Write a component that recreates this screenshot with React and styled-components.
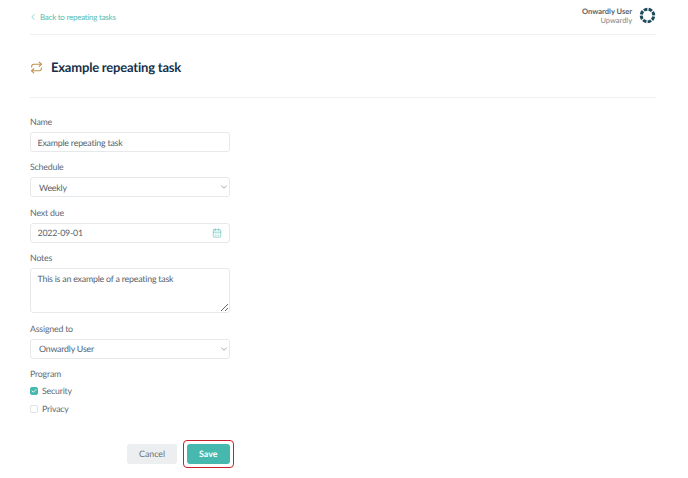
import React from 'react';
import styled, { createGlobalStyle } from 'styled-components';
import { ChevronLeft, ChevronDown, Repeat, CalendarDays, Check } from 'lucide-react';

const GlobalStyle = createGlobalStyle`
    html, body {
        margin: 0;
        padding: 0;
        background: #fff;
    }
    * {
        box-sizing: border-box;
    }
    body, input, select, textarea, button {
        text-rendering: geometricPrecision;
    }
`;

const FONT = `Lato, "Noto Sans", sans-serif`;
const TIGHT = '-0.2px';

const Page = styled.div`
    width: 688px;
    height: 478px;
    padding: 0 32px 0 30px;
    font-family: ${FONT};
    overflow: hidden;
`;

// top bar
const TopBar = styled.header`
    height: 35px;
    display: flex;
    align-items: center;
    justify-content: space-between;
    border-bottom: 1px solid #eef0f1;
`;

const BackLink = styled.a`
    display: flex;
    align-items: center;
    gap: 2px;
    margin-left: -2px;
    color: #57bdb3;
    font-size: 8px;
    letter-spacing: -0.25px;
`;

const UserBox = styled.div`
    display: flex;
    align-items: center;
    gap: 7px;
    margin-bottom: 3px;
`;

const UserText = styled.div`
    text-align: right;
    font-size: 7.5px;
    line-height: 9px;
    color: #7d858b;
    strong {
        display: block;
        color: #585f66;
        font-weight: 700;
    }
`;

// title
const TitleRow = styled.div`
    height: 63px;
    display: flex;
    align-items: center;
    gap: 8px;
    padding-top: 2px;
    border-bottom: 1px solid #eef0f1;
    color: #c2924f;
`;

const Title = styled.h1`
    margin: 0;
    font-size: 13px;
    font-weight: 700;
    letter-spacing: ${TIGHT};
    color: #16304a;
`;

// form
const Form = styled.form`
    width: 199.5px;
    padding-top: 17px;
    display: flex;
    flex-direction: column;
`;

const Label = styled.label`
    display: block;
    height: 14px;
    line-height: 14px;
    margin-bottom: ${(p) => p.$gap ?? 3}px;
    font-size: 8.8px;
    letter-spacing: ${TIGHT};
    color: #5f6a72;
`;

const Field = styled.div`
    position: relative;
    margin-bottom: ${(p) => p.$gap ?? 8.3}px;
`;

const Input = styled.input`
    display: block;
    width: 100%;
    height: 20px;
    padding: 0 6.5px;
    border: 1px solid #e6e9eb;
    border-radius: 3px;
    background: #fff;
    font-family: ${FONT};
    font-size: 8.8px;
    letter-spacing: ${TIGHT};
    color: #56616a;
    outline: none;
`;

const Select = styled.select`
    display: block;
    width: 100%;
    height: 20px;
    padding: 0 8px;
    border: 1px solid #e6e9eb;
    border-radius: 3px;
    background: #fff;
    font-family: ${FONT};
    font-size: 8.8px;
    letter-spacing: ${TIGHT};
    color: #56616a;
    appearance: none;
    outline: none;
`;

const TextArea = styled.textarea`
    display: block;
    width: 100%;
    height: 45px;
    padding: 4px 6.5px;
    border: 1px solid #e6e9eb;
    border-radius: 3px;
    font-family: ${FONT};
    font-size: 8.8px;
    letter-spacing: ${TIGHT};
    line-height: 12px;
    color: #56616a;
    outline: none;
`;

// icon sitting on top of a field
const FieldIcon = styled.span`
    position: absolute;
    top: 5px;
    right: ${(p) => p.$right}px;
    display: flex;
    color: ${(p) => p.$color};
    pointer-events: none;
`;

const CheckRow = styled.div`
    display: flex;
    align-items: center;
    gap: 4px;
    height: 18px;
    font-size: 8.8px;
    letter-spacing: ${TIGHT};
    color: #5f6a72;
`;

const Box = styled.span`
    width: 8px;
    height: 8px;
    display: flex;
    align-items: center;
    justify-content: center;
    border-radius: 2px;
    border: 1px solid ${(p) => (p.$checked ? '#46b8ad' : '#dfe3e5')};
    background: ${(p) => (p.$checked ? '#46b8ad' : '#fff')};
    color: #fff;
`;

const Actions = styled.div`
    display: flex;
    justify-content: flex-end;
    gap: 10px;
    margin-top: 26px;
`;

const Button = styled.button`
    position: relative;
    height: 20px;
    width: ${(p) => p.$width}px;
    border: none;
    border-radius: 3px;
    font-family: ${FONT};
    font-size: 8.8px;
    font-weight: ${(p) => (p.$primary ? 700 : 400)};
    background: ${(p) => (p.$primary ? '#46b8ad' : '#eceeef')};
    color: ${(p) => (p.$primary ? '#fff' : '#68727a')};
`;

// red annotation drawn round the save button
const Highlight = styled.span`
    position: absolute;
    top: -4px;
    left: -4px;
    right: -4.5px;
    bottom: -4px;
    border: 1.5px solid #c8202c;
    border-radius: 4px;
`;

function RingLogo() {
    const dots = Array.from({ length: 8 }, (_, i) => i * 45 + 10);
    return (
        <svg width="17" height="17" viewBox="0 0 34 34">
            {dots.map((a) => (
                <path
                    key={a}
                    d="M17 4.5 a12.5 12.5 0 0 1 7 2.1"
                    fill="none"
                    stroke="#1e4a5a"
                    strokeWidth="6"
                    transform={`rotate(${a} 17 17)`}
                />
            ))}
        </svg>
    );
}

export default function App() {
    return (
        <Page>
            <GlobalStyle />
            <TopBar>
                <BackLink>
                    <ChevronLeft size={10} strokeWidth={1.5} />
                    Back to repeating tasks
                </BackLink>
                <UserBox>
                    <UserText>
                        <strong>Onwardly User</strong>
                        Upwardly
                    </UserText>
                    <RingLogo />
                </UserBox>
            </TopBar>

            <TitleRow>
                <Repeat size={13} strokeWidth={2} />
                <Title>Example repeating task</Title>
            </TitleRow>

            <Form onSubmit={(e) => e.preventDefault()}>
                <Label>Name</Label>
                <Field>
                    <Input defaultValue="Example repeating task" />
                </Field>

                <Label>Schedule</Label>
                <Field>
                    <Select defaultValue="Weekly">
                        <option>Weekly</option>
                    </Select>
                    <FieldIcon $right={1} $color="#6c767d">
                        <ChevronDown size={10} strokeWidth={1.5} />
                    </FieldIcon>
                </Field>

                <Label>Next due</Label>
                <Field>
                    <Input defaultValue="2022-09-01" />
                    <FieldIcon $right={8} $color="#57bdb3">
                        <CalendarDays size={10} strokeWidth={1.5} />
                    </FieldIcon>
                </Field>

                <Label>Notes</Label>
                <Field $gap={9}>
                    <TextArea defaultValue="This is an example of a repeating task" />
                </Field>

                <Label>Assigned to</Label>
                <Field $gap={8}>
                    <Select defaultValue="Onwardly User">
                        <option>Onwardly User</option>
                    </Select>
                    <FieldIcon $right={1} $color="#6c767d">
                        <ChevronDown size={10} strokeWidth={1.5} />
                    </FieldIcon>
                </Field>

                <Label $gap={1}>Program</Label>
                <CheckRow>
                    <Box $checked>
                        <Check size={6} strokeWidth={3.5} />
                    </Box>
                    Security
                </CheckRow>
                <CheckRow>
                    <Box />
                    Privacy
                </CheckRow>

                <Actions>
                    <Button type="button" $width={50}>Cancel</Button>
                    <Button type="submit" $primary $width={42.5}>
                        Save
                        <Highlight />
                    </Button>
                </Actions>
            </Form>
        </Page>
    );
}
